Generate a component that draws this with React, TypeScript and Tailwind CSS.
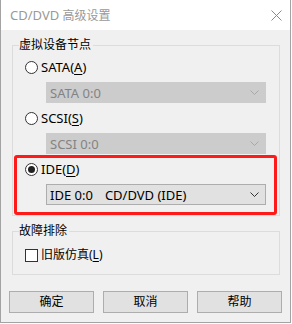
import React from "react";

const Radio = ({ checked }: { checked?: boolean }) => (
  <span className="w-[13px] h-[13px] rounded-full border border-[#333333] bg-white flex items-center justify-center shrink-0">
    {checked && <span className="w-[7px] h-[7px] rounded-full bg-[#222222]" />}
  </span>
);

const Chevron = ({ color }: { color: string }) => (
  <svg width="9" height="5" viewBox="0 0 9 5" className="shrink-0">
    <path d="M0.5 0.5 L4.5 4.5 L8.5 0.5" fill="none" stroke={color} strokeWidth="1" />
  </svg>
);

const Combo = ({ disabled, children }: { disabled?: boolean; children: React.ReactNode }) => (
  <div
    className={
      disabled
        ? "ml-[21px] w-[220px] h-[21px] border border-[#cccccc] bg-[#cccccc] flex items-center pl-[3px] pr-[6px] text-[#838383]"
        : "ml-[21px] w-[220px] h-[21px] border border-[#adadad] bg-[#e1e1e1] flex items-center pl-[3px] pr-[6px] text-black"
    }
  >
    <span className="text-[13px] leading-[16px] whitespace-pre">{children}</span>
    <span className="ml-auto">
      <Chevron color={disabled ? "#a8a8a8" : "#333333"} />
    </span>
  </div>
);

const GroupHeader = ({ label }: { label: string }) => (
  <div className="flex h-[16px]">
    <div className="w-[7px] h-[8px] self-end border-t border-l border-[#dcdcdc]" />
    <span className="leading-[16px] pr-[2px]">{label}</span>
    <div className="flex-1 h-[8px] self-end border-t border-r border-[#dcdcdc]" />
  </div>
);

export default function App() {
  return (
    <div className="w-[292px] h-[324px] bg-white relative text-[12px] text-black font-['Noto_Sans','Noto_Sans_CJK_SC',sans-serif]">
      <div className="w-[291px] h-[323px] border-x border-b border-[#a3a3a3] flex flex-col">
        {/* title bar */}
        <div className="h-[30px] bg-white flex items-center pl-[9px] pr-[8px] shrink-0">
          <span className="text-[#999999] leading-[16px]">
            <span className="text-[13px]">CD/DVD </span>高级设置
          </span>
          <svg width="11" height="11" viewBox="0 0 11 11" className="ml-auto">
            <path d="M0.5 0.5 L10.5 10.5 M10.5 0.5 L0.5 10.5" stroke="#8a8a8a" strokeWidth="1" fill="none" />
          </svg>
        </div>
        {/* body */}
        <div className="flex-1 bg-[#f0f0f0] flex flex-col pt-[7px]">
          {/* group 1 */}
          <div className="ml-[11px] w-[268px] flex flex-col">
            <GroupHeader label="虚拟设备节点" />
            <div className="border-x border-b border-[#dcdcdc] pl-[12px] pt-[6px] pb-[10px] flex flex-col">
              <div className="h-[16px] flex items-center gap-[3px]">
                <Radio />
                <span className="text-[13px] leading-[16px]">
                  SATA(<span className="underline underline-offset-2">A</span>)
                </span>
              </div>
              <div className="mt-[7px]">
                <Combo disabled>SATA 0:0</Combo>
              </div>
              <div className="h-[16px] flex items-center gap-[3px] mt-[7px]">
                <Radio />
                <span className="text-[13px] leading-[16px]">
                  SCSI(<span className="underline underline-offset-2">S</span>)
                </span>
              </div>
              <div className="mt-[7px]">
                <Combo disabled>SCSI 0:0</Combo>
              </div>
              <div className="h-[16px] flex items-center gap-[3px] mt-[7px]">
                <Radio checked />
                <span className="text-[13px] leading-[16px]">
                  IDE(<span className="underline underline-offset-2">D</span>)
                </span>
              </div>
              <div className="mt-[7px]">
                <Combo>
                  IDE 0:0<span className="inline-block w-[12px]" />CD/DVD (IDE)
                </Combo>
              </div>
            </div>
          </div>
          {/* group 2 */}
          <div className="ml-[11px] w-[268px] flex flex-col mt-[7px]">
            <GroupHeader label="故障排除" />
            <div className="border-x border-b border-[#dcdcdc] pl-[12px] pt-[8px] pb-[11px] flex flex-col">
              <div className="h-[16px] flex items-center gap-[3px]">
                <span className="w-[13px] h-[13px] border border-[#333333] bg-white shrink-0" />
                <span className="leading-[16px]">
                  旧版仿真(<span className="underline underline-offset-2">L</span>)
                </span>
              </div>
            </div>
          </div>
          {/* buttons */}
          <div className="ml-[8px] mt-[16px] flex gap-[9px]">
            {["确定", "取消", "帮助"].map((t) => (
              <div
                key={t}
                className="w-[85px] h-[22px] border border-[#adadad] bg-[#e1e1e1] flex items-center justify-center leading-[16px]"
              >
                {t}
              </div>
            ))}
          </div>
        </div>
      </div>
      {/* red annotation */}
      <div className="absolute left-[14px] top-[155px] w-[263px] h-[60px] border-[3px] border-[#ff1a1a] rounded-[3px]" />
    </div>
  );
}
